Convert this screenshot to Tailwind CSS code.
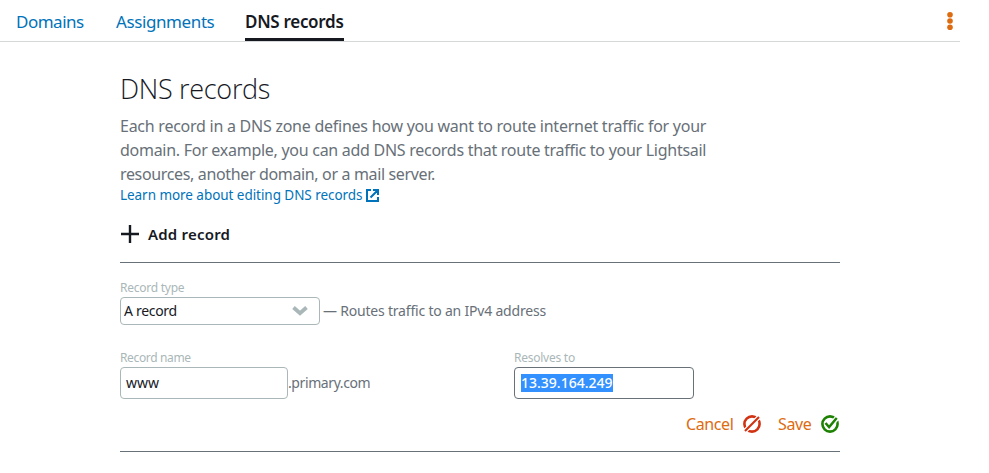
<!DOCTYPE html>
<html lang="en">
<head>
<meta charset="utf-8">
<title>DNS records</title>
<script src="https://cdn.jsdelivr.net/npm/@tailwindcss/browser@4"></script>
</head>
<body class="h-[473px] overflow-hidden bg-white font-['Noto_Sans','Open_Sans',sans-serif] text-[#687078]">
<header class="flex h-[42px] w-[960px] items-start justify-between border-b border-[#d5d8d9] pl-4">
  <nav class="flex h-[41px] gap-[31px] text-[17px] leading-[44px] whitespace-nowrap text-[#0073bb]">
    <a class="w-[69px] tracking-[-0.5px]">Domains</a>
    <a class="w-[98px] tracking-[-0.4px]">Assignments</a>
    <a class="w-[99px] border-b-3 border-[#16191f] font-semibold tracking-[-0.3px] text-[#16191f]">DNS records</a>
  </nav>
  <svg class="mt-[11px] mr-[7px]" width="6" height="20" viewBox="0 0 6 20" fill="#dd6b10"><circle cx="3" cy="3.7" r="2.8"/><circle cx="3" cy="10" r="2.8"/><circle cx="3" cy="16.3" r="2.8"/></svg>
</header>
<main class="ml-[120px] w-[720px]">
  <h1 class="pt-[27px] font-['Open_Sans','Noto_Sans',sans-serif] text-[27px] leading-[40px] font-light tracking-[-0.3px] text-[#16191f]">DNS records</h1>
  <div class="mt-[5px] text-[16px] leading-6 whitespace-nowrap">
    <p class="tracking-[-0.25px]">Each record in a DNS zone defines how you want to route internet traffic for your</p>
    <p class="tracking-[-0.275px]">domain. For example, you can add DNS records that route traffic to your Lightsail</p>
    <p class="tracking-[-0.35px]">resources, another domain, or a mail server.</p>
  </div>
  <a class="flex h-[18px] items-center gap-1 text-[13.5px] leading-[18px] whitespace-nowrap text-[#0073bb]"><span class="w-[242px] tracking-[-0.05px]">Learn more about editing DNS records</span><svg width="13" height="13" viewBox="0 0 13 13" fill="none" stroke="#0073bb" stroke-width="2"><path d="M5 1H1v11h11V8M4.5 8.5 11 2M7 1h5v5"/></svg></a>
  <div class="mt-[18px] flex h-6 items-center gap-2 text-[15px] leading-6 font-semibold text-[#16191f]"><svg width="20" height="20" viewBox="0 0 20 20" stroke="#16191f" stroke-width="2.4"><path d="M1 10h18M10 1v18"/></svg><span class="tracking-[0.2px]">Add record</span></div>
  <section class="mt-4 h-[190px] border-y border-[#687078] pt-[17px]">
    <label class="block text-[12px] leading-4 tracking-[-0.25px] text-[#aab7b8]">Record type</label>
    <div class="mt-[1px] flex h-7 items-center text-sm whitespace-nowrap">
      <div class="flex h-7 w-[200px] items-center justify-between rounded-[4px] border border-[#aab7b8] pr-[11px] pl-[3px] text-[#16191f]"><span class="tracking-[-0.3px]">A record</span><svg width="16" height="10" viewBox="0 0 16 10" fill="none" stroke="#aab7b8" stroke-width="3.8"><path d="m1.5 1.5 6.5 5.7 6.5-5.7"/></svg></div>
      <span class="ml-[3px] tracking-[-0.2px]">— Routes traffic to an IPv4 address</span>
    </div>
    <div class="mt-[25px] flex">
      <div class="w-[394px]">
        <label class="block text-[12px] leading-4 tracking-[-0.35px] text-[#aab7b8]">Record name</label>
        <div class="mt-[1px] flex items-center text-sm"><div class="flex h-8 w-[168px] items-center rounded-[4px] border border-[#aab7b8] px-[5px] text-[#16191f]">www</div><span class="tracking-[-0.4px]">.primary.com</span></div>
      </div>
      <div>
        <label class="block text-[12px] leading-4 tracking-[-0.25px] text-[#aab7b8]">Resolves to</label>
        <div class="mt-[1px] flex h-8 w-[180px] items-center rounded-[4px] border border-[#687078] px-[6px] text-sm"><span class="h-[18px] w-[92px] bg-[#3390ff] leading-[18px] font-medium whitespace-nowrap text-white">13.39.164.249</span></div>
      </div>
    </div>
    <div class="mt-[13px] mr-px flex h-6 items-center justify-end text-[16px] text-[#dd6b10]">
      <span class="w-[57px] tracking-[-0.4px]">Cancel</span>
      <svg width="18" height="18" viewBox="0 0 18 18" fill="none" stroke="#d13212" stroke-width="2.6"><circle cx="9" cy="9" r="7.6"/><path stroke="#fff" stroke-width="4.6" d="M1 17 17 1"/><path stroke-width="2.2" d="M2 16 16 2"/></svg>
      <span class="ml-[17px] w-[43px] tracking-[-0.4px]">Save</span>
      <svg width="18" height="18" viewBox="0 0 18 18" fill="none" stroke="#1d8102" stroke-width="2.6"><circle cx="9" cy="9" r="7.6"/><path stroke="#fff" stroke-width="5" d="m8 12 8-9"/><path stroke-width="2.5" d="m4.5 8 3.6 4 7.6-9"/></svg>
    </div>
  </section>
</main>
</body>
</html>
